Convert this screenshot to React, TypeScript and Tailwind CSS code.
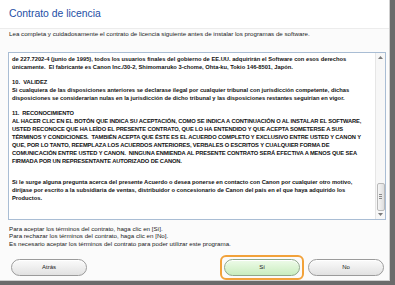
import React from "react";

const paragraphs: { lines: string[]; caps?: boolean }[] = [
  {
    lines: [
      "de 227.7202-4 (junio de 1995), todos los usuarios finales del gobierno de EE.UU. adquirirán el Software con esos derechos",
      "únicamente.  El fabricante es Canon Inc./30-2, Shimomaruko 3-chome, Ohta-ku, Tokio 146-8501, Japón.",
    ],
  },
  {
    lines: [
      "10.  VALIDEZ",
      "Si cualquiera de las disposiciones anteriores se declarase ilegal por cualquier tribunal con jurisdicción competente, dichas",
      "disposiciones se considerarían nulas en la jurisdicción de dicho tribunal y las disposiciones restantes seguirían en vigor.",
    ],
  },
  {
    caps: true,
    lines: [
      "11.  RECONOCIMIENTO",
      "AL HACER CLIC EN EL BOTÓN QUE INDICA SU ACEPTACIÓN, COMO SE INDICA A CONTINUACIÓN O AL INSTALAR EL SOFTWARE,",
      "USTED RECONOCE QUE HA LEÍDO EL PRESENTE CONTRATO, QUE LO HA ENTENDIDO Y QUE ACEPTA SOMETERSE A SUS",
      "TÉRMINOS Y CONDICIONES.  TAMBIÉN ACEPTA QUE ÉSTE ES EL ACUERDO COMPLETO Y EXCLUSIVO ENTRE USTED Y CANON Y",
      "QUE, POR LO TANTO, REEMPLAZA LOS ACUERDOS ANTERIORES, VERBALES O ESCRITOS Y CUALQUIER FORMA DE",
      "COMUNICACIÓN ENTRE USTED Y CANON.  NINGUNA ENMIENDA AL PRESENTE CONTRATO SERÁ EFECTIVA A MENOS QUE SEA",
      "FIRMADA POR UN REPRESENTANTE AUTORIZADO DE CANON.",
    ],
  },
];

const closing: string[] = [
  "Si le surge alguna pregunta acerca del presente Acuerdo o desea ponerse en contacto con Canon por cualquier otro motivo,",
  "diríjase por escrito a la subsidiaria de ventas, distribuidor o concesionario de Canon del país en el que haya adquirido los",
  "Productos.",
];

function Scrollbar() {
  return (
    <div className="w-[10px] border-l border-[#e6e6e6] bg-[#f7f7f7] flex flex-col items-center">
      <div className="h-[10px] flex items-center justify-center">
        <svg width="5" height="3" viewBox="0 0 5 3">
          <path d="M0 3 L2.5 0 L5 3 Z" fill="#7a7a7a" />
        </svg>
      </div>
      <div className="flex-1" />
      <div className="w-[8px] h-[28px] rounded-[2px] border border-[#b9b9b9] bg-gradient-to-r from-[#f6f6f6] to-[#dedede] flex flex-col items-center justify-center gap-[1px]">
        <div className="w-[3px] h-px bg-[#8a8a8a]" />
        <div className="w-[3px] h-px bg-[#8a8a8a]" />
        <div className="w-[3px] h-px bg-[#8a8a8a]" />
      </div>
      <div className="h-[8px] flex items-center justify-center">
        <svg width="5" height="3" viewBox="0 0 5 3">
          <path d="M0 0 L2.5 3 L5 0 Z" fill="#7a7a7a" />
        </svg>
      </div>
    </div>
  );
}

function Button({ label, green }: { label: string; green?: boolean }) {
  return (
    <button
      className={`w-[76px] h-[17px] rounded-full border text-[6px] text-[#222] flex items-center justify-center shadow-[inset_0_1px_0_#ffffff] ${
        green
          ? "border-[#8fa78a] bg-gradient-to-b from-[#eefbe9] to-[#c9edbf]"
          : "border-[#9b9b9b] bg-gradient-to-b from-[#fbfbfb] to-[#e2e2e2]"
      }`}
    >
      {label}
    </button>
  );
}

export default function App() {
  return (
    <div className="w-[395px] h-[285px] bg-[#6b6b6b] font-['Liberation_Sans',Arial,sans-serif]">
      <div className="w-[390px] h-[281px] bg-[#fbfbfb] border-r border-b border-[#cfcfcf] flex flex-col">
        <div className="h-[29px] bg-white border-b border-[#ececec] px-[9px] pt-[7px]">
          <h1 className="text-[10.4px] leading-[13px] text-[#1d4ea5]">Contrato de licencia</h1>
        </div>
        <p className="mt-[1px] px-[9px] text-[6.2px] leading-[8px] text-[#222]">
          Lea completa y cuidadosamente el contrato de licencia siguiente antes de instalar los programas de software.
        </p>
        <div className="mt-[14px] ml-[8px] w-[378px] h-[170px] border border-[#a9bdd4] bg-white flex">
          <div className="flex-1 pl-[3px] pt-[2px] text-[5.75px] leading-[8px] font-bold text-[#111] whitespace-pre">
            {paragraphs.map((p, i) => (
              <div key={i} className={p.caps ? "mb-[7px] tracking-[-0.12px]" : "mb-[7px]"}>
                {p.lines.map((l, j) => (
                  <div key={j}>{l}</div>
                ))}
              </div>
            ))}
            <div className="mt-[13px]">
              {closing.map((l, j) => (
                <div key={j}>{l}</div>
              ))}
            </div>
          </div>
          <Scrollbar />
        </div>
        <div className="mt-[5px] px-[9px] text-[6.2px] leading-[7.5px] text-[#222]">
          <p>Para aceptar los términos del contrato, haga clic en [Sí].</p>
          <p>Para rechazar los términos del contrato, haga clic en [No].</p>
          <p>Es necesario aceptar los términos del contrato para poder utilizar este programa.</p>
        </div>
        <div className="mt-[8px] flex items-center pl-[11px] pr-[5px]">
          <Button label="Atrás" />
          <div className="flex-1" />
          <div className="p-[2px] rounded-[6px] border-2 border-[#f2a23a]">
            <Button label="Sí" green />
          </div>
          <div className="ml-[4px]">
            <Button label="No" />
          </div>
        </div>
      </div>
    </div>
  );
}
